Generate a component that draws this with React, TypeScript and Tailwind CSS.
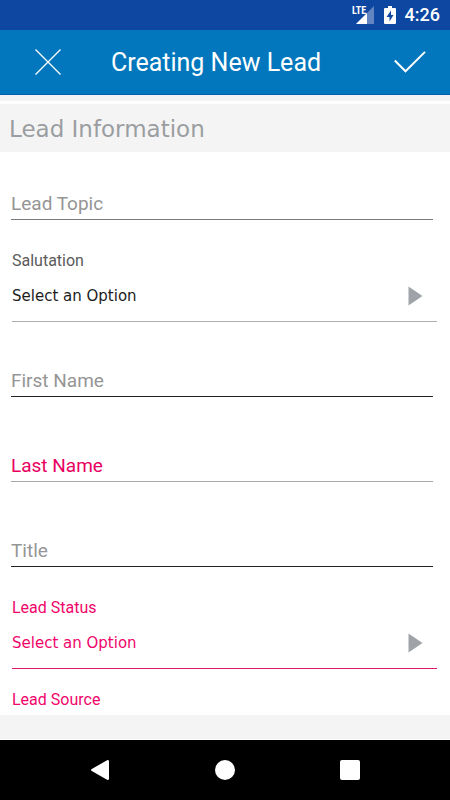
import { useState } from 'react'
import clsx from 'clsx'

interface TextFieldProps {
  label: string
  required?: boolean
  line: string
}

function TextField({ label, required, line }: TextFieldProps) {
  const [value, setValue] = useState('')

  return (
    <div className="h-[78px] pt-9 pb-[10px] pl-[11px] pr-[17px]">
      <input
        type="text"
        aria-label={label}
        placeholder={label}
        value={value}
        onChange={(e) => setValue(e.target.value)}
        className={clsx(
          'block w-full h-8 bg-transparent border-b outline-none text-[19px] text-black',
          required ? 'placeholder:text-[#e8005f]' : 'placeholder:text-[#959595]',
          line
        )}
      />
    </div>
  )
}

interface SelectFieldProps {
  id: string
  label: string
  required?: boolean
}

function SelectField({ id, label, required }: SelectFieldProps) {
  return (
    <div className="pt-3 pl-3 pr-[13px]">
      <label
        htmlFor={id}
        className={clsx('block text-base leading-6', required ? 'text-[#f0056a]' : 'text-[#5a5a5a]')}
      >
        {label}
      </label>
      <div
        className={clsx(
          'grid items-center h-[49px] border-b',
          required ? 'border-[#e0186a] text-[#f0056a]' : 'border-[#adadad] text-[#1c1c1c]'
        )}
      >
        <select
          id={id}
          className="col-start-1 row-start-1 w-full h-12 pb-[2px] appearance-none bg-transparent outline-none font-[Verdana,'DejaVu_Sans',sans-serif] text-[15px]"
        >
          <option>Select an Option</option>
        </select>
        <svg
          width="15"
          height="20"
          viewBox="0 0 15 20"
          className="col-start-1 row-start-1 justify-self-end mr-[14px] mb-[2px] pointer-events-none"
        >
          <path d="M0.5 0.5L14.5 10L0.5 19.5Z" fill="#9fa3a7" />
        </svg>
      </div>
    </div>
  )
}

function StatusBar() {
  return (
    <div className="flex items-center justify-end h-[30px] pr-[10px] bg-[#0d47a1] text-white">
      {/* Signal */}
      <svg width="24" height="20" viewBox="0 0 24 20" className="mr-[9px]">
        <path d="M23 1V19H5Z" fill="#6284c0" />
        <path d="M16 8V19H5Z" fill="#fff" />
        <path d="M0 0H13V10H0Z" fill="#0d47a1" />
        <text x="1" y="9" fill="#fff" fontSize="10" fontWeight="700" fontFamily="'Liberation Sans Narrow', 'Roboto Condensed', Roboto, sans-serif">
          LTE
        </text>
      </svg>
      {/* Battery */}
      <svg width="12" height="18" viewBox="0 0 12 18" className="mr-[9px]">
        <path d="M4 0H8V2H11Q12 2 12 3V17Q12 18 11 18H1Q0 18 0 17V3Q0 2 1 2H4Z" fill="#fff" />
        <path d="M7 4.5L2.5 11H5.5V15.5L9.5 9H7Z" fill="#0d47a1" />
      </svg>
      <span className="text-[18px] leading-6 font-medium">4:26</span>
    </div>
  )
}

export default function App() {
  return (
    <div className="flex flex-col min-h-screen bg-white font-[Roboto,sans-serif]">
      <StatusBar />

      <header className="flex items-center h-[65px] px-6 bg-[#0277bd] border-b border-[#0460b0] text-white">
        <button type="button" aria-label="Close" className="flex items-center justify-center w-12 h-12">
          <svg width="26" height="26" viewBox="0 0 26 26" fill="none" stroke="#fff" strokeWidth="1.3">
            <path d="M0.5 0.5L25.5 25.5M25.5 0.5L0.5 25.5" />
          </svg>
        </button>
        <h1 className="flex-1 pt-[2px] pr-[18px] text-center text-[25px] leading-8">Creating New Lead</h1>
        <button type="button" aria-label="Save" className="flex items-center justify-end w-12 h-12">
          <svg width="32" height="22" viewBox="0 0 32 22" fill="none" stroke="#fff" strokeWidth="2">
            <path d="M0.8 9.5L11.5 20.3L31 0.9" />
          </svg>
        </button>
      </header>

      <div className="h-[9px] bg-[#f4f4f4] border-b-3 border-white" />
      <h2 className="h-12 pl-[9px] bg-[#f4f4f4] text-[#9b9ea1] font-[Verdana,'DejaVu_Sans',sans-serif] text-[23px] leading-[50px]">
        Lead Information
      </h2>

      <form className="flex flex-col flex-1 gap-[7px]">
        <TextField label="Lead Topic" line="border-[#7a7a7a]" />
        <SelectField id="salutation" label="Salutation" />
        <TextField label="First Name" line="border-[#222]" />
        <TextField label="Last Name" required line="border-[#a8a8a8]" />
        <TextField label="Title" line="border-[#222]" />
        <SelectField id="lead-status" label="Lead Status" required />
        <p className="pt-3 pl-3 text-base leading-6 text-[#f0056a]">Lead Source</p>
      </form>

      <div className="h-[25px] bg-[#f4f4f4] border-b border-white" />

      {/* Android navigation */}
      <nav className="flex items-center justify-center gap-[77px] h-[60px] bg-black">
        <button type="button" aria-label="Back" className="flex items-center justify-center w-12 h-12">
          <svg width="20" height="20" viewBox="0 0 20 20">
            <path d="M17.5 0Q19 0 19 1.2V18.8Q19 20 17.5 20L1.8 11Q0.2 10 1.8 9Z" fill="#fff" />
          </svg>
        </button>
        <button type="button" aria-label="Home" className="flex items-center justify-center w-12 h-12">
          <span className="w-5 h-5 rounded-full bg-white" />
        </button>
        <button type="button" aria-label="Recent apps" className="flex items-center justify-center w-12 h-12">
          <span className="w-5 h-5 rounded-xs bg-white" />
        </button>
      </nav>
    </div>
  )
}
